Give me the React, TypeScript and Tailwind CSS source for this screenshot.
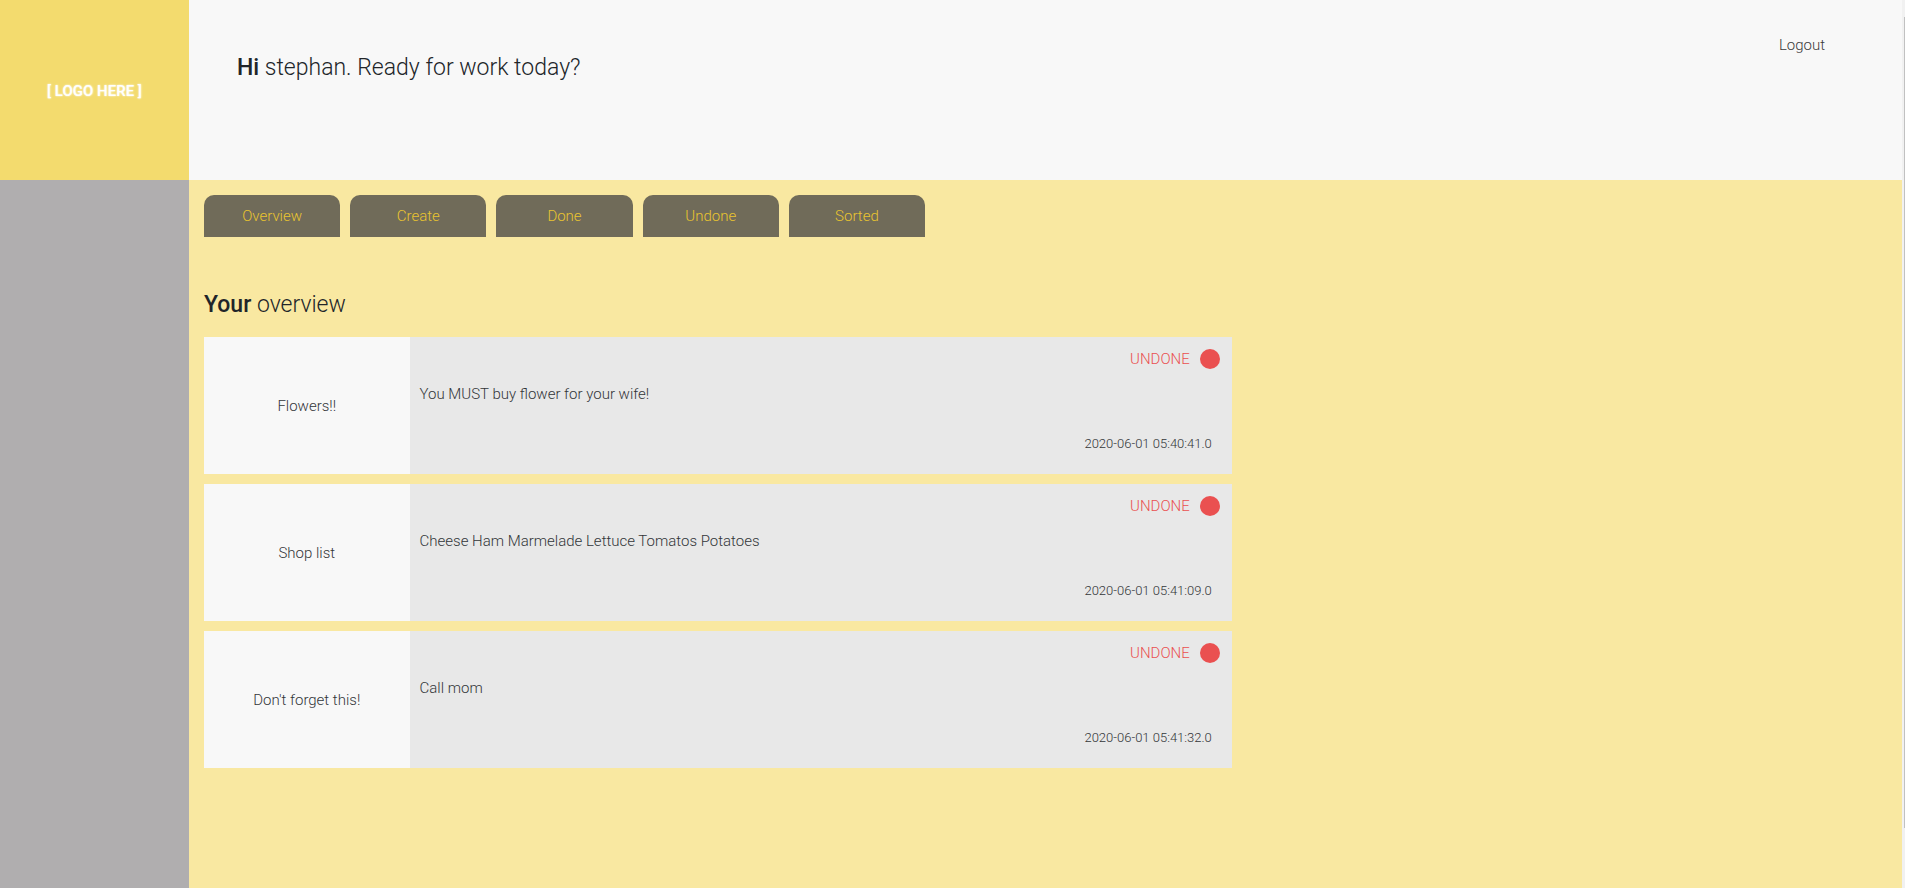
type Task = { title: string; content: string; created: string };

const tabs = ['Overview', 'Create', 'Done', 'Undone', 'Sorted'];

const tasks: Task[] = [
  { title: 'Flowers!!', content: 'You MUST buy flower for your wife!', created: '2020-06-01 05:40:41.0' },
  { title: 'Shop list', content: 'Cheese Ham Marmelade Lettuce Tomatos Potatoes', created: '2020-06-01 05:41:09.0' },
  { title: "Don't forget this!", content: 'Call mom', created: '2020-06-01 05:41:32.0' },
];

function Sidebar() {
  return (
    <aside className="flex w-[189px] shrink-0 flex-col bg-[#b0aeaf]">
      <div className="flex h-[180px] items-center justify-center bg-[#f3db6e] pt-0.5 text-[15px] font-medium text-white [text-shadow:0_0_2px_#fff]">
        [ LOGO HERE ]
      </div>
    </aside>
  );
}

function Header() {
  return (
    <header className="flex h-[180px] items-start justify-between bg-[#f8f8f8] pr-[77px] pl-12">
      <h1 className="mt-[53px] text-[23px] leading-[30px]">
        <span className="font-medium">Hi</span> stephan. Ready for work today?
      </h1>
      <a href="#logout" className="mt-[35px] leading-5 text-[#3b3b3b]">
        Logout
      </a>
    </header>
  );
}

function Tabs() {
  return (
    <nav className="flex w-[721px] max-w-full gap-2.5">
      {tabs.map((tab) => (
        <a
          key={tab}
          href={`#${tab.toLowerCase()}`}
          className="flex h-[42px] flex-1 items-center justify-center rounded-t-[10px] bg-[#706b59] text-[#eac52f]"
        >
          {tab}
        </a>
      ))}
    </nav>
  );
}

function TaskCard({ title, content, created }: Task) {
  return (
    <li className="flex h-[137px] bg-[#e8e8e8] text-[#333639]">
      <h3 className="flex w-1/5 items-center justify-center bg-[#f8f8f8] pt-0.5">{title}</h3>
      <div className="flex flex-1 flex-col pt-3 pr-3 pb-5 pl-2.5">
        <div className="flex items-center justify-end gap-2.5 leading-5 text-[#ea5050]">
          UNDONE
          <span className="size-5 rounded-full bg-[#ea5050]" />
        </div>
        <p className="mt-[15px] leading-5">{content}</p>
        <time className="mt-auto mr-2 self-end text-[13px] leading-5">{created}</time>
      </div>
    </li>
  );
}

function ScrollTrack() {
  return (
    <div className="flex w-[3px] shrink-0 flex-col items-end bg-[#f1f1f1] pt-[17px] pb-[60px]">
      <div className="w-px flex-1 bg-[#c1c1c1]" />
    </div>
  );
}

export default function App() {
  return (
    <div className="flex min-h-screen bg-[#f9e8a1] font-['Roboto',sans-serif] text-[15px] font-light text-[#212529]">
      <Sidebar />
      <div className="min-w-0 flex-1">
        <Header />
        <main className="py-[15px]">
          <div className="pl-[15px]">
            <Tabs />
          </div>
          <h2 className="mt-[53px] ml-[15px] text-[23px] leading-[30px]">
            <span className="font-medium">Your</span> overview
          </h2>
          <ul className="mt-[17px] ml-[15px] flex w-3/5 flex-col gap-2.5">
            {tasks.map((task) => (
              <TaskCard key={task.title} {...task} />
            ))}
          </ul>
        </main>
      </div>
      <ScrollTrack />
    </div>
  );
}
